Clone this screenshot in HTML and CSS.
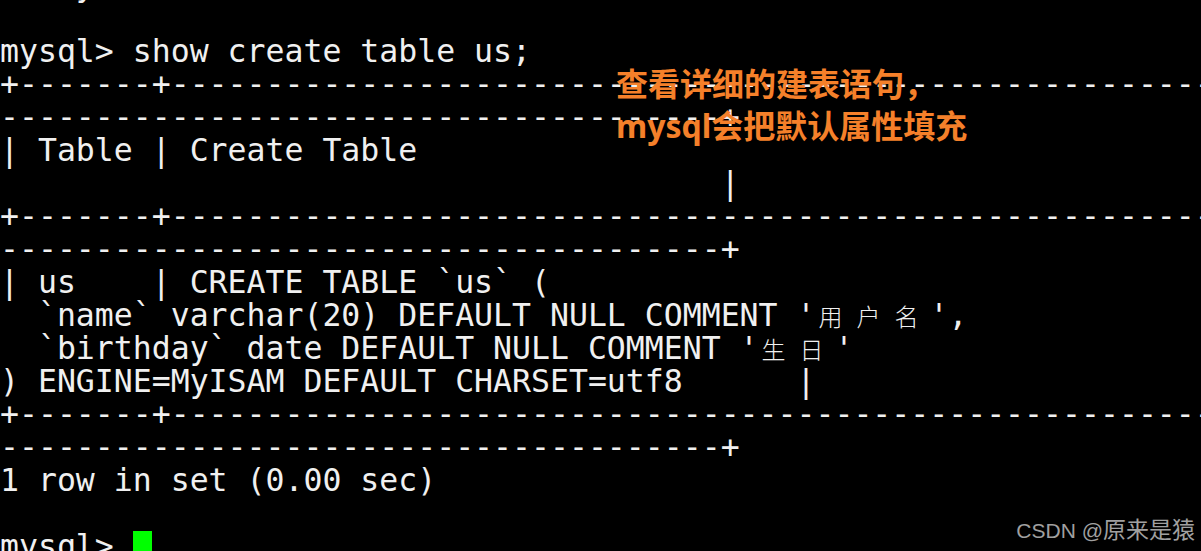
FILE: index.html
```html
<!DOCTYPE html>
<html lang="zh">
<head>
<meta charset="utf-8">
<title>mysql show create table</title>
<link rel="stylesheet" href="styles.css">
</head>
<body>
<div class="screen">
  <div class="term">
    <div class="ln">Query OK</div>
    <div class="ln"></div>
    <div class="ln">mysql&gt; show create table us;</div>
    <div class="ln">+-------+----------------------------------------------------------------</div>
    <div class="ln">--------------------------------------+</div>
    <div class="ln">| Table | Create Table</div>
    <div class="ln">                                      |</div>
    <div class="ln">+-------+----------------------------------------------------------------</div>
    <div class="ln">--------------------------------------+</div>
    <div class="ln">| us    | CREATE TABLE `us` (</div>
    <div class="ln">  `name` varchar(20) DEFAULT NULL COMMENT '<span class="cjk">用</span><span class="cjk">户</span><span class="cjk">名</span>',</div>
    <div class="ln">  `birthday` date DEFAULT NULL COMMENT '<span class="cjk">生</span><span class="cjk">日</span>'</div>
    <div class="ln">) ENGINE=MyISAM DEFAULT CHARSET=utf8      |</div>
    <div class="ln">+-------+----------------------------------------------------------------</div>
    <div class="ln">--------------------------------------+</div>
    <div class="ln">1 row in set (0.00 sec)</div>
    <div class="ln"></div>
    <div class="ln">mysql&gt; <span class="cursor"></span></div>
  </div>
  <div class="note">
    <div class="note-line">查看详细的建表语句，</div>
    <div class="note-line">mysql会把默认属性填充</div>
  </div>
  <div class="mark">CSDN @<span class="mark-cjk">原来是猿</span></div>
</div>
</body>
</html>
```
FILE: styles.css
```css
html, body {
  margin: 0;
  padding: 0;
  background: #000;
}
.screen {
  position: relative;
  width: 1201px;
  height: 551px;
  overflow: hidden;
  background: #000;
}
.term {
  margin-top: -31px;
  font-family: "DejaVu Sans Mono", "Liberation Mono", monospace;
  font-size: 31.5px;
  line-height: 33px;
  color: #f0f0f0;
}
.ln {
  height: 33px;
  white-space: pre;
}
.cjk {
  display: inline-block;
  width: 38px;
  padding-left: 3px;
  box-sizing: border-box;
  font-family: "Noto Sans CJK SC", sans-serif;
  font-weight: 300;
  font-size: 24px;
  line-height: 24px;
  vertical-align: baseline;
}
.cursor {
  display: inline-block;
  width: 19px;
  height: 33px;
  background: #00ff00;
  vertical-align: -7px;
}
.note {
  position: absolute;
  left: 616px;
  top: 63px;
  color: #f5802a;
  font-family: "Noto Sans", "Noto Sans CJK SC", sans-serif;
  font-weight: 700;
  font-size: 32px;
  line-height: 42px;
  white-space: nowrap;
}
.mark {
  position: absolute;
  right: 6px;
  bottom: 8px;
  color: #a0a0a0;
  font-family: "Liberation Sans", Arial, "Noto Sans CJK SC", sans-serif;
  font-size: 21px;
  line-height: 24px;
  white-space: nowrap;
}
.mark-cjk {
  font-family: "Noto Sans CJK SC", sans-serif;
  font-size: 23px;
}
```
